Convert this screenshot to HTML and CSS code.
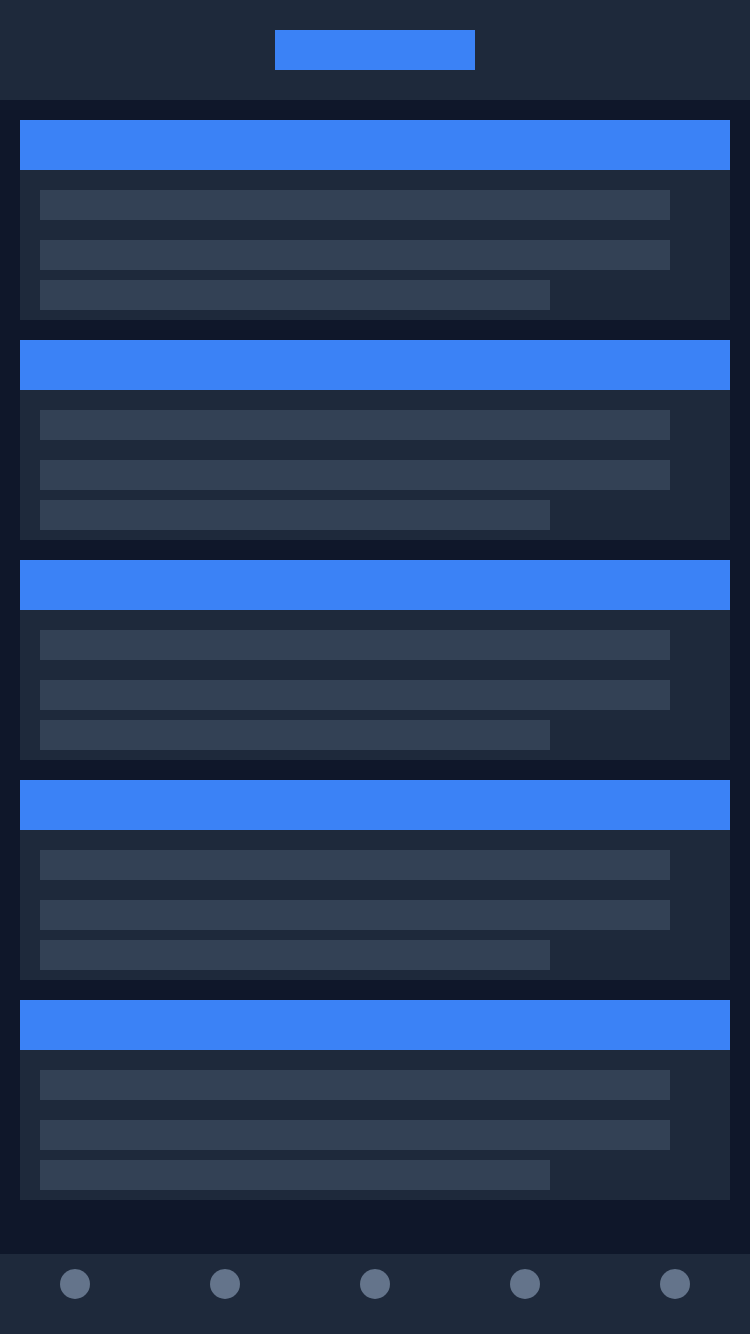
FILE: index.html
```html
<!DOCTYPE html>
<html lang="en">
<head>
<meta charset="utf-8">
<title>Dashboard</title>
<link rel="stylesheet" href="styles.css">
</head>
<body>
<div class="app">
  <header class="topbar"><div class="logo"></div></header>
  <main class="content">
    <section class="card"><div class="card-head"></div><div class="card-body"><div class="line title"></div><div class="line full"></div><div class="line short"></div></div></section>
    <section class="card"><div class="card-head"></div><div class="card-body"><div class="line title"></div><div class="line full"></div><div class="line short"></div></div></section>
    <section class="card"><div class="card-head"></div><div class="card-body"><div class="line title"></div><div class="line full"></div><div class="line short"></div></div></section>
    <section class="card"><div class="card-head"></div><div class="card-body"><div class="line title"></div><div class="line full"></div><div class="line short"></div></div></section>
    <section class="card"><div class="card-head"></div><div class="card-body"><div class="line title"></div><div class="line full"></div><div class="line short"></div></div></section>
  </main>
  <nav class="tabbar">
    <span class="tab"></span><span class="tab"></span><span class="tab"></span><span class="tab"></span><span class="tab"></span>
  </nav>
</div>
</body>
</html>
```
FILE: styles.css
```css
html, body {
  margin: 0;
  padding: 0;
  background: #0f172a;
  font-family: "Liberation Sans", Arial, sans-serif;
}
.app {
  display: flex;
  flex-direction: column;
  height: 1334px;
}
.topbar {
  height: 100px;
  background: #1e293b;
  display: flex;
  justify-content: center;
  align-items: center;
  flex-shrink: 0;
}
.logo {
  width: 200px;
  height: 40px;
  background: #3b82f6;
}
.content {
  flex: 1;
  padding: 20px;
  display: flex;
  flex-direction: column;
  gap: 20px;
}
.card {
  background: #1e293b;
}
.card-head {
  height: 50px;
  background: #3b82f6;
}
.card-body {
  padding: 20px 20px 10px;
  display: flex;
  flex-direction: column;
}
.line {
  height: 30px;
  background: #334155;
}
.line.title { width: 630px; margin-bottom: 20px; }
.line.full { width: 630px; margin-bottom: 10px; }
.line.short { width: 510px; }
.tabbar {
  height: 80px;
  box-sizing: border-box;
  padding-top: 15px;
  background: #1e293b;
  display: flex;
  justify-content: space-around;
  align-items: flex-start;
  flex-shrink: 0;
}
.tab {
  width: 30px;
  height: 30px;
  border-radius: 50%;
  background: #64748b;
}
```
